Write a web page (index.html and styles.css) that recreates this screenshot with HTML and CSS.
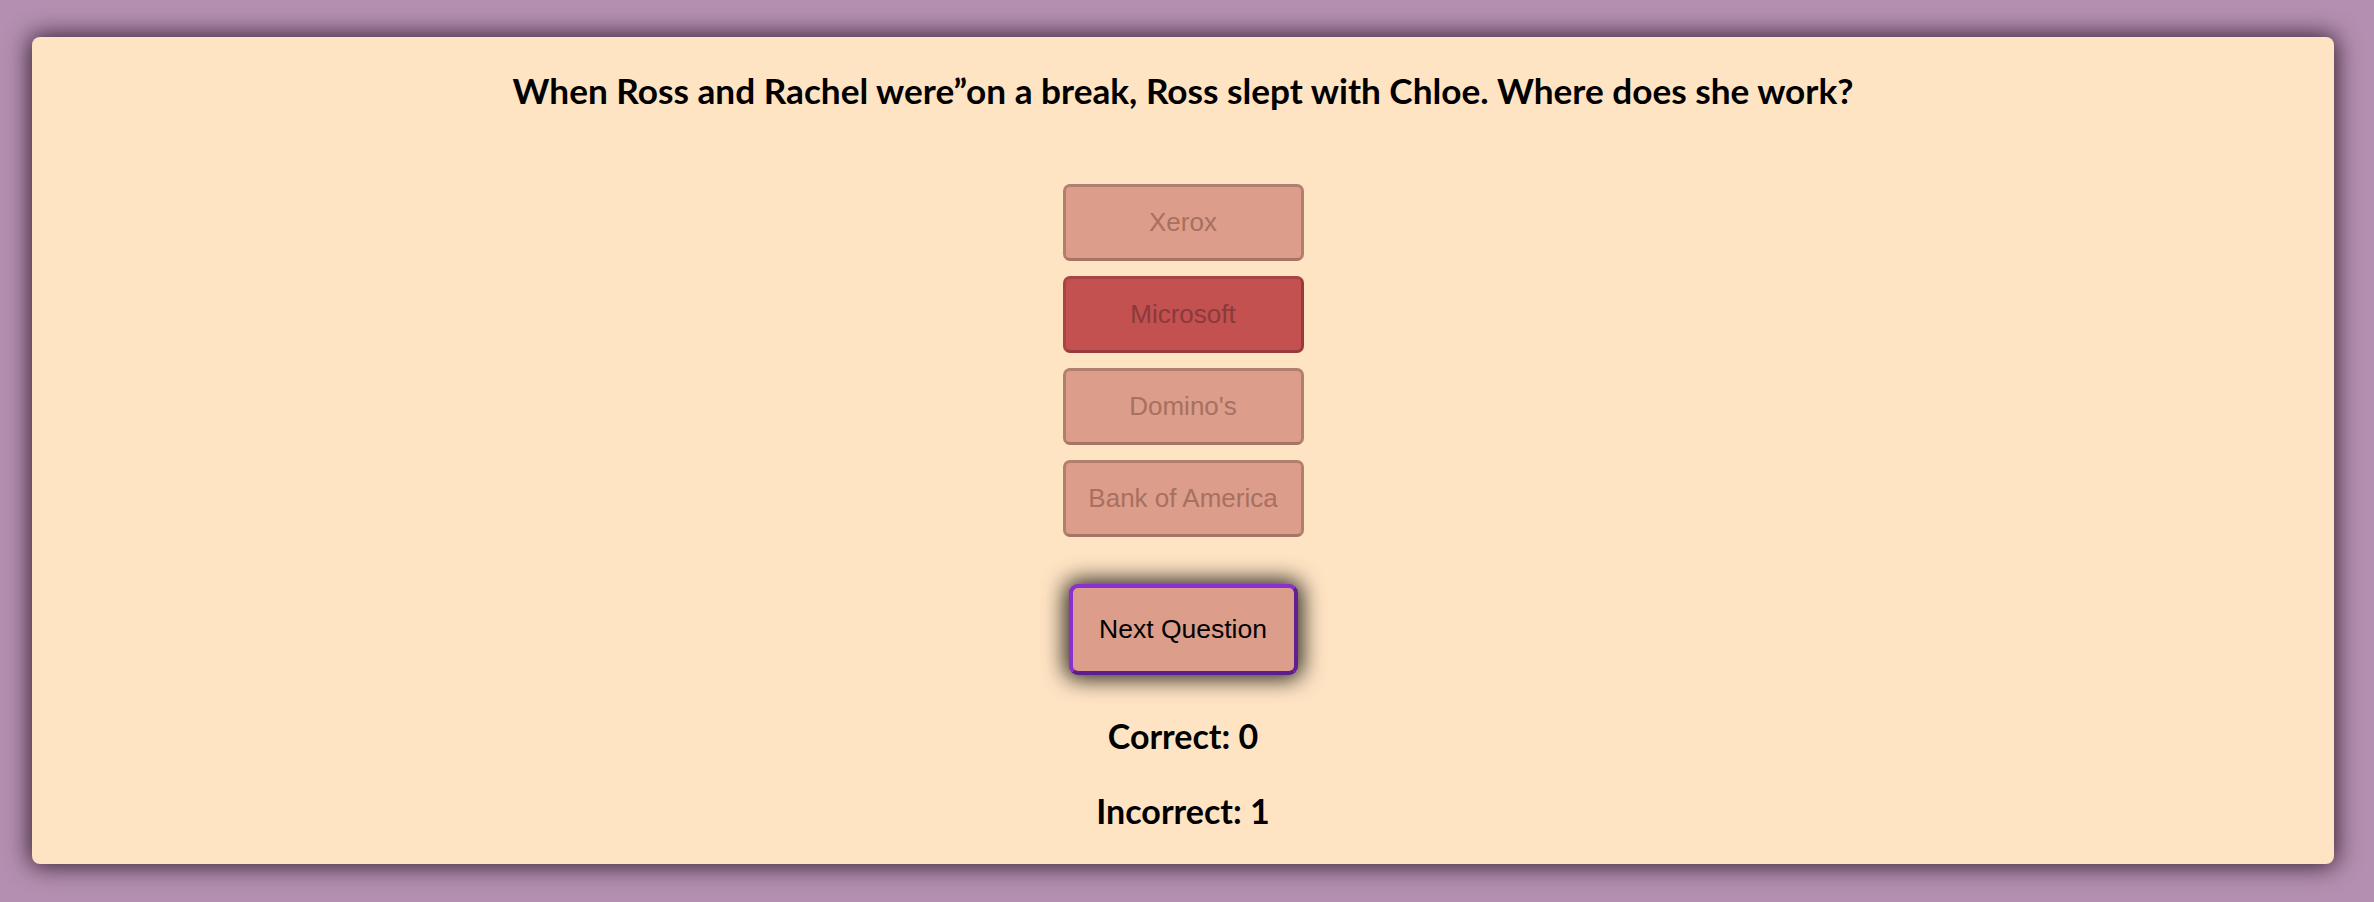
FILE: index.html
```html
<!DOCTYPE html>
<html lang="en">
<head>
<meta charset="utf-8">
<title>Friends Trivia</title>
<link rel="stylesheet" href="styles.css">
</head>
<body>
<main class="card">
  <h2 class="question">When Ross and Rachel were”on a break, Ross slept with Chloe. Where does she work?</h2>
  <div class="answers">
    <button class="answer" disabled>Xerox</button>
    <button class="answer wrong" disabled>Microsoft</button>
    <button class="answer" disabled>Domino's</button>
    <button class="answer" disabled>Bank of America</button>
  </div>
  <button class="next">Next Question</button>
  <p class="score">Correct: 0</p>
  <p class="score">Incorrect: 1</p>
</main>
</body>
</html>
```

FILE: styles.css
```css
html, body {
  margin: 0;
  height: 100%;
}
body {
  box-sizing: border-box;
  background: #b48fb1;
  padding: 37px 40px 38px 32px;
  font-family: "Lato", "Noto Sans", sans-serif;
}
.card {
  box-sizing: border-box;
  height: 100%;
  background: #ffe4c4;
  border-radius: 8px;
  box-shadow: 0 0 24px 2px rgba(20, 0, 15, 0.8);
  display: flex;
  flex-direction: column;
  align-items: center;
  padding-top: 33px;
}
.question {
  margin: 0;
  font-size: 35.2px;
  line-height: 40px;
  font-weight: 700;
  color: #000;
  text-align: center;
}
.answers {
  display: flex;
  flex-direction: column;
  gap: 15px;
  margin-top: 74px;
}
.answer {
  box-sizing: border-box;
  width: 241px;
  height: 77px;
  font-family: "Liberation Sans", Arial, sans-serif;
  font-size: 26px;
  color: #a8705f;
  background: #dc9d8b;
  border: 3px solid #b07f6f;
  border-bottom-color: #a67566;
  border-radius: 7px;
  padding: 0;
}
.answer.wrong {
  background: #c25150;
  border-color: #a84444;
  border-bottom-color: #983a3b;
  border-right-color: #983a3b;
  color: #8a3a3a;
}
.next {
  box-sizing: border-box;
  margin-top: 47px;
  width: 229px;
  height: 91px;
  font-family: "Liberation Sans", Arial, sans-serif;
  font-size: 26.5px;
  color: #000;
  background: #dc9d8b;
  border: 4px solid #8a2fd0;
  border-right-color: #62208f;
  border-bottom-color: #5c1e8c;
  border-radius: 9px;
  box-shadow: 0 0 22px 4px rgba(0, 0, 0, 0.85);
  padding: 0;
}
.score {
  margin: 0;
  font-size: 34px;
  line-height: 40px;
  font-weight: 700;
  color: #000;
}
.score:first-of-type {
  margin-top: 41px;
}
.score + .score {
  margin-top: 35px;
}
```
